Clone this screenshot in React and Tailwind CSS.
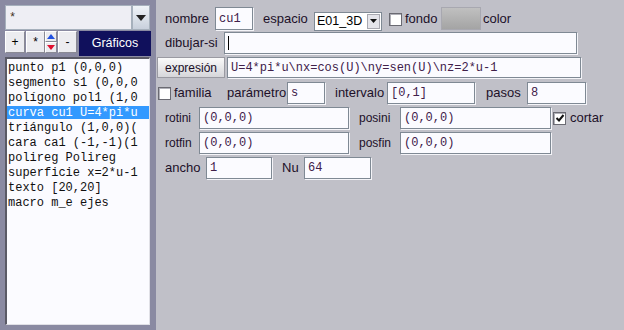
import React from 'react';

const mono = { fontFamily: '"Liberation Mono", "Courier New", monospace' };
const sans = { fontFamily: '"Liberation Sans", Arial, sans-serif' };

const items = [
  'punto p1 (0,0,0)',
  'segmento s1 (0,0,0',
  'polígono pol1 (1,0',
  'curva cu1 U=4*pi*u',
  'triángulo (1,0,0)(',
  'cara ca1 (-1,-1)(1',
  'polireg Polireg',
  'superficie x=2*u-1',
  'texto [20,20]',
  'macro m_e ejes',
];

function Field({ w, value, h = 'h-[22px]' }) {
  return (
    <div
      className={`${w} ${h} flex items-center pl-[3px] bg-[#fbfbff] border border-[#7f8994] shadow-[1px_1px_0_#f4f4f8] text-[12px] text-[#40204a] overflow-hidden whitespace-nowrap`}
      style={mono}
    >
      {value}
    </div>
  );
}

function Check({ checked }) {
  return (
    <div className="w-[13px] h-[13px] bg-white border border-[#6a6a72] shadow-[inset_1px_1px_0_#b0b0b8] flex items-center justify-center">
      {checked && (
        <svg width="10" height="10" viewBox="0 0 10 10">
          <path d="M1.5 5 L4 7.5 L8.5 2" fill="none" stroke="#111" strokeWidth="2" />
        </svg>
      )}
    </div>
  );
}

function Label({ w, children, size = 'text-[12px]' }) {
  return <span className={`${w} ${size} text-[#201028] shrink-0`}>{children}</span>;
}

function SmallBtn({ w, children }) {
  return (
    <div className={`${w} h-[22px] bg-[#ececf0] border border-t-white border-l-white border-r-[#8a8a94] border-b-[#8a8a94] flex items-center justify-center text-[12px] text-black`}>
      {children}
    </div>
  );
}

export default function App() {
  return (
    <div className="w-[624px] h-[330px] flex overflow-hidden" style={sans}>
      <div className="w-[156px] h-full bg-[#8a8aa2] pl-[5px] pt-[5px] flex flex-col">
        <div className="flex h-[25px]">
          <div className="w-[127px] h-full bg-[#eeeef4] border border-[#a6b0bc] flex items-center pl-[3px] text-[12px] text-[#403020]" style={mono}>
            *
          </div>
          <div className="w-[18px] h-full bg-gradient-to-b from-[#f0f4f8] to-[#c8d0dc] border border-[#a6b0bc] flex items-center justify-center">
            <svg width="10" height="6" viewBox="0 0 10 6"><path d="M0 0 H10 L5 6 Z" fill="#222" /></svg>
          </div>
        </div>
        <div className="flex mt-[1px] h-[25px]">
          <SmallBtn w="w-[20px]">+</SmallBtn>
          <div className="w-[1px]" />
          <SmallBtn w="w-[19px]">*</SmallBtn>
          <div className="w-[12px] h-[22px] flex flex-col">
            <div className="h-[11px] bg-[#ececf0] border border-t-white border-l-white border-r-[#8a8a94] border-b-[#8a8a94] flex items-center justify-center">
              <svg width="8" height="5" viewBox="0 0 8 5"><path d="M0 5 L4 0 L8 5 Z" fill="#2050e0" /></svg>
            </div>
            <div className="h-[11px] bg-[#ececf0] border border-t-white border-l-white border-r-[#8a8a94] border-b-[#8a8a94] flex items-center justify-center">
              <svg width="8" height="5" viewBox="0 0 8 5"><path d="M0 0 H8 L4 5 Z" fill="#e01030" /></svg>
            </div>
          </div>
          <div className="w-[1px]" />
          <SmallBtn w="w-[19px]">-</SmallBtn>
          <div className="w-[2px]" />
          <div className="w-[72px] h-[25px] bg-[#10105c] flex items-center justify-center text-[12.5px] text-white">
            Gráficos
          </div>
        </div>
        <div className="mt-[1px] w-[145px] h-[268px] bg-[#fbfbff] border-l-2 border-t-2 border-l-[#5a5a66] border-t-[#5a5a66] border-r border-b border-r-[#e0e0e6] border-b-[#e0e0e6] pt-[1px]">
          <ul className="text-[12px] text-[#101010]" style={mono}>
            {items.map((t, i) => (
              <li key={i} className="h-[15px] flex items-center">
                <div className={`w-full h-[13px] flex items-center pl-[1px] whitespace-nowrap overflow-hidden ${i === 3 ? 'bg-[#3399ff] text-white' : ''}`}>
                  {t}
                </div>
              </li>
            ))}
          </ul>
        </div>
      </div>

      <div className="flex-1 h-full bg-[#c0c0c8] pt-[7px] flex flex-col">
        <div className="flex items-center h-[23px] pl-[9px]">
          <Label w="w-[50px]" size="text-[13px]">nombre</Label>
          <Field w="w-[38px]" h="h-[23px]" value="cu1" />
          <span className="ml-[10px]"><Label w="w-[51px] block" size="text-[13px]">espacio</Label></span>
          <div className="w-[68px] h-[19px] mt-[5px] bg-white border border-[#7f8994] flex items-center pl-[2px] pr-[1px] text-[12.5px] text-black">
            <span className="flex-1 whitespace-nowrap overflow-hidden">E01_3D</span>
            <div className="w-[13px] h-[15px] ml-[2px] bg-[#e4e4ea] border border-[#a8a8b0] flex items-center justify-center">
              <svg width="7" height="4" viewBox="0 0 7 4"><path d="M0 0 H7 L3.5 4 Z" fill="#111" /></svg>
            </div>
          </div>
          <div className="ml-[7px] mt-[1px]"><Check /></div>
          <span className="ml-[3px]"><Label w="w-[36px] block" size="text-[13px]">fondo</Label></span>
          <div className="w-[40px] h-[23px] bg-gradient-to-b from-[#c0c0c0] to-[#a4a4a4] border border-[#a8a8b0]" />
          <span className="ml-[2px]"><Label w="w-[40px] block" size="text-[13px]">color</Label></span>
        </div>

        <div className="flex items-center h-[22px] mt-[2px] pl-[9px]">
          <Label w="w-[59px]" size="text-[13px]">dibujar-si</Label>
          <div className="w-[353px] h-[22px] bg-[#fbfbff] border border-[#7f8994] shadow-[1px_1px_0_#f4f4f8] flex items-center pl-[3px]">
            <div className="w-[1px] h-[14px] bg-black" />
          </div>
        </div>

        <div className="flex items-center h-[21px] mt-[3px] pl-[1px]">
          <div className="w-[68px] h-[21px] bg-gradient-to-b from-[#fafafa] to-[#d6d6da] border border-[#9a9aa2] flex items-center justify-center text-[12px] text-[#201028]">
            expresión
          </div>
          <div className="w-[2px]" />
          <Field w="w-[354px]" h="h-[21px]" value={'U=4*pi*u\\nx=cos(U)\\ny=sen(U)\\nz=2*u-1'} />
        </div>

        <div className="flex items-center h-[22px] mt-[4px] pl-[2px]">
          <Check />
          <span className="ml-[3px]"><Label w="w-[53px] block" size="text-[13px]">familia</Label></span>
          <Label w="w-[60px]" size="text-[13px]">parámetro</Label>
          <Field w="w-[38px]" value="s" />
          <span className="ml-[10px]"><Label w="w-[52px] block" size="text-[13px]">intervalo</Label></span>
          <Field w="w-[88px]" value="[0,1]" />
          <span className="ml-[11px]"><Label w="w-[41px] block" size="text-[13px]">pasos</Label></span>
          <Field w="w-[59px]" value="8" />
        </div>

        <div className="flex items-center h-[22px] mt-[3px] pl-[9px]">
          <Label w="w-[34px]">rotini</Label>
          <Field w="w-[150px]" value="(0,0,0)" />
          <span className="ml-[10px]"><Label w="w-[41px] block">posini</Label></span>
          <Field w="w-[151px]" value="(0,0,0)" />
          <div className="ml-[2px]"><Check checked /></div>
          <span className="ml-[4px]"><Label w="w-[40px] block" size="text-[13px]">cortar</Label></span>
        </div>

        <div className="flex items-center h-[22px] mt-[3px] pl-[9px]">
          <Label w="w-[34px]">rotfin</Label>
          <Field w="w-[150px]" value="(0,0,0)" />
          <span className="ml-[10px]"><Label w="w-[41px] block">posfin</Label></span>
          <Field w="w-[151px]" value="(0,0,0)" />
        </div>

        <div className="flex items-center h-[22px] mt-[3px] pl-[9px]">
          <Label w="w-[41px]" size="text-[13px]">ancho</Label>
          <Field w="w-[66px]" value="1" />
          <span className="ml-[10px]"><Label w="w-[22px] block" size="text-[13px]">Nu</Label></span>
          <Field w="w-[67px]" value="64" />
        </div>
      </div>
    </div>
  );
}
